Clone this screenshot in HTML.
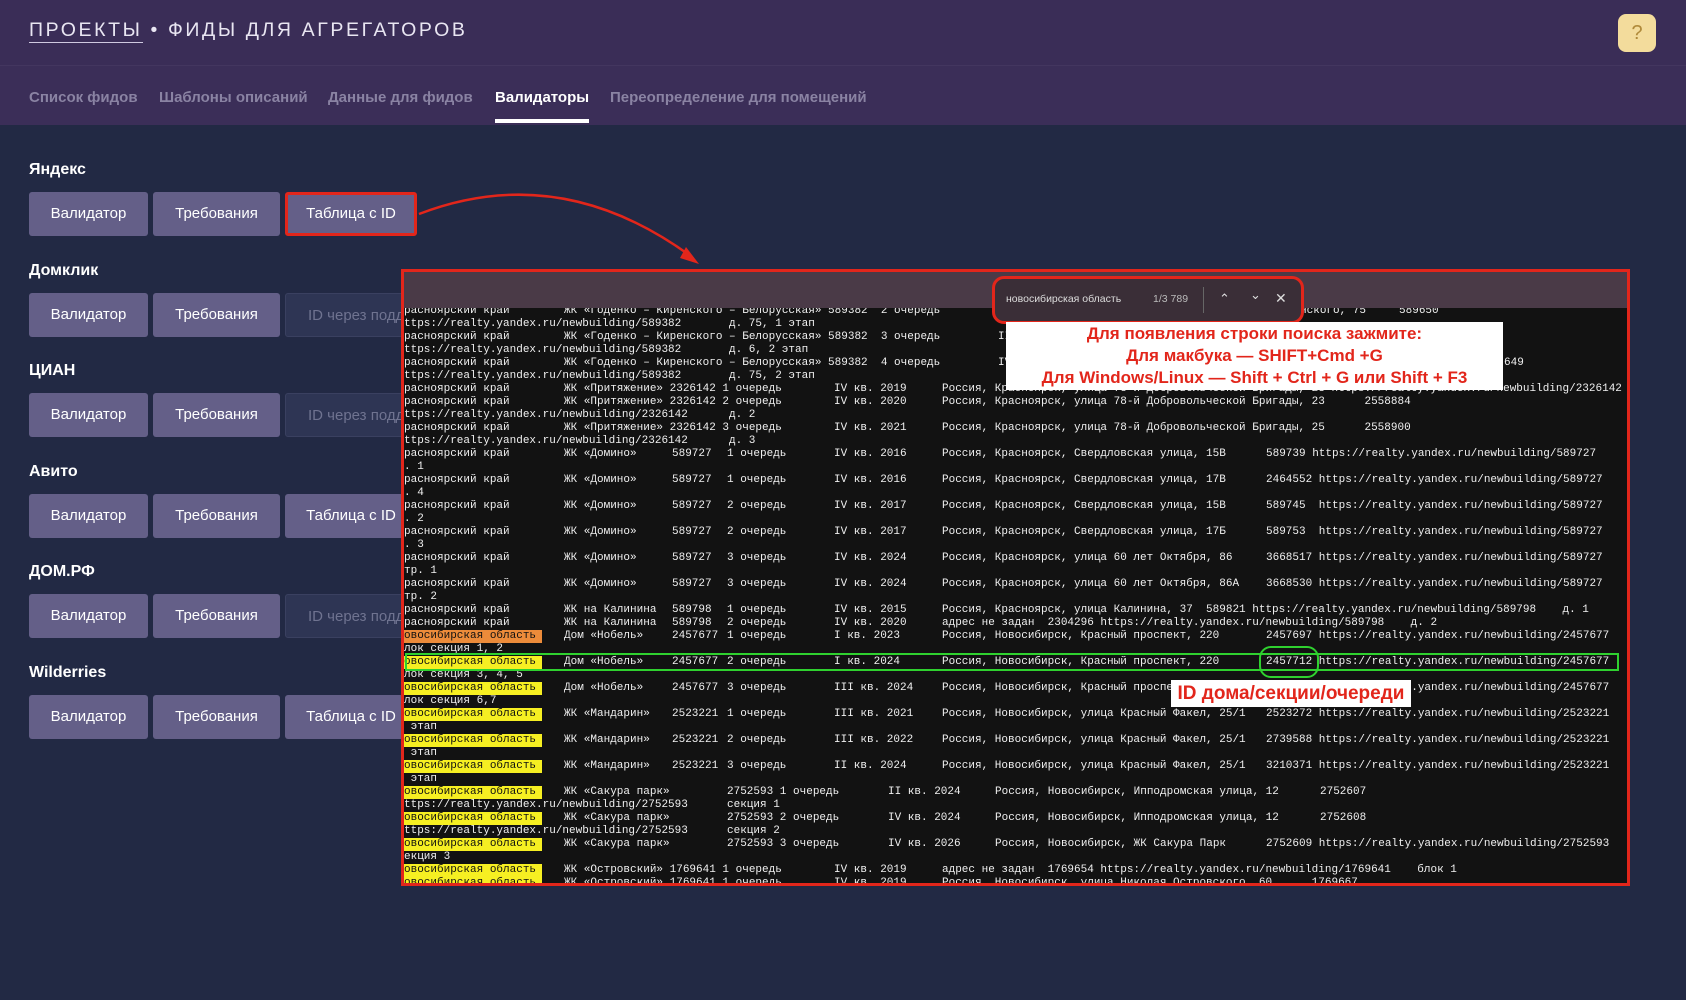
<!DOCTYPE html>
<html><head><meta charset="utf-8"><style>
*{margin:0;padding:0;box-sizing:border-box}
body{width:1686px;height:1000px;background:#222944;font-family:"Liberation Sans",sans-serif;position:relative;overflow:hidden}
.hdr{position:absolute;left:0;top:0;width:1686px;height:65px;background:#3a2d57}
.nav{position:absolute;left:0;top:65px;width:1686px;height:60px;background:#3b2e58;border-top:1px solid #43365f}
.title{position:absolute;left:29px;top:19px;color:#e9e6f2;font-size:19.5px;letter-spacing:2.6px}
.title u{text-decoration:none;border-bottom:1.5px solid #cfc9e0;padding-bottom:1px}
.help{position:absolute;left:1618px;top:14px;width:38px;height:38px;border-radius:8px;background:#f3dc9c;color:#b08a3a;font-size:20px;text-align:center;line-height:38px}
.tab{position:absolute;top:89px;color:#8a83a3;font-size:15px;font-weight:bold}
.tab.act{color:#fff}
.ul{position:absolute;left:495px;top:119px;width:94px;height:4px;background:#fff}
h3{position:absolute;left:29px;color:#fff;font-size:16px;font-weight:bold}
.btn{position:absolute;height:44px;border-radius:3px;background:#645f88;color:#fff;font-size:15px;text-align:center;line-height:44px}
.dis{background:#2e3554;color:#6f7390;text-align:left;padding-left:22px;border:1px solid #3a4060}
.term{position:absolute;left:401px;top:269px;width:1229px;height:617px;background:#121212;border:3px solid #e2261b;overflow:hidden}
.bar{position:absolute;left:0;top:0;width:100%;height:36px;background:#4a3a47;z-index:2}
.l{position:absolute;left:0;height:13px;width:100%;font-family:"Liberation Mono","DejaVu Sans Mono",monospace;font-size:11px;color:#f0f0f0;white-space:pre;line-height:13px}
.l i{font-style:normal;position:absolute;top:0}
.y{background:#f6ef22;color:#111}
.o{background:#ec8b3a;color:#111}
</style></head><body>
<div class="hdr"></div><div class="nav"></div>
<div class="title"><u>ПРОЕКТЫ</u> • ФИДЫ ДЛЯ АГРЕГАТОРОВ</div>
<div class="help">?</div>
<div class="tab" style="left:29px">Список фидов</div>
<div class="tab" style="left:159px">Шаблоны описаний</div>
<div class="tab" style="left:328px">Данные для фидов</div>
<div class="tab act" style="left:495px">Валидаторы</div>
<div class="tab" style="left:610px">Переопределение для помещений</div>
<div class="ul"></div>

<h3 style="top:161px">Яндекс</h3>
<div class="btn" style="left:29px;top:192px;width:119px">Валидатор</div>
<div class="btn" style="left:153px;top:192px;width:127px">Требования</div>
<div class="btn" style="left:285px;top:192px;width:132px;border:3px solid #e2261b;line-height:38px">Таблица с ID</div>

<h3 style="top:262px">Домклик</h3>
<div class="btn" style="left:29px;top:293px;width:119px">Валидатор</div>
<div class="btn" style="left:153px;top:293px;width:127px">Требования</div>
<div class="btn dis" style="left:285px;top:293px;width:140px">ID через подд</div>

<h3 style="top:362px">ЦИАН</h3>
<div class="btn" style="left:29px;top:393px;width:119px">Валидатор</div>
<div class="btn" style="left:153px;top:393px;width:127px">Требования</div>
<div class="btn dis" style="left:285px;top:393px;width:140px">ID через подд</div>

<h3 style="top:463px">Авито</h3>
<div class="btn" style="left:29px;top:494px;width:119px">Валидатор</div>
<div class="btn" style="left:153px;top:494px;width:127px">Требования</div>
<div class="btn" style="left:285px;top:494px;width:132px">Таблица с ID</div>

<h3 style="top:563px">ДОМ.РФ</h3>
<div class="btn" style="left:29px;top:594px;width:119px">Валидатор</div>
<div class="btn" style="left:153px;top:594px;width:127px">Требования</div>
<div class="btn dis" style="left:285px;top:594px;width:140px">ID через подд</div>

<h3 style="top:664px">Wilderries</h3>
<div class="btn" style="left:29px;top:695px;width:119px">Валидатор</div>
<div class="btn" style="left:153px;top:695px;width:127px">Требования</div>
<div class="btn" style="left:285px;top:695px;width:132px">Таблица с ID</div>

<div class="term">
<div class="bar"></div>
<div class="l" style="top:33px"><i style="left:0">расноярский край</i><i style="left:160px">ЖК «Годенко – Киренского – Белорусская» 589382  2 очередь</i><i style="left:830px">емика Киренского, 75     589650</i></div>
<div class="l" style="top:46px"><i style="left:0">ttps://realty.yandex.ru/newbuilding/589382</i><i style="left:325px">д. 75, 1 этап</i></div>
<div class="l" style="top:59px"><i style="left:0">расноярский край</i><i style="left:160px">ЖК «Годенко – Киренского – Белорусская» 589382  3 очередь</i><i style="left:594px">II</i></div>
<div class="l" style="top:72px"><i style="left:0">ttps://realty.yandex.ru/newbuilding/589382</i><i style="left:325px">д. 6, 2 этап</i></div>
<div class="l" style="top:85px"><i style="left:0">расноярский край</i><i style="left:160px">ЖК «Годенко – Киренского – Белорусская» 589382  4 очередь</i><i style="left:594px">IV</i><i style="left:1100px">649</i></div>
<div class="l" style="top:98px"><i style="left:0">ttps://realty.yandex.ru/newbuilding/589382</i><i style="left:325px">д. 75, 2 этап</i></div>
<div class="l" style="top:111px"><i style="left:0">расноярский край</i><i style="left:160px">ЖК «Притяжение» 2326142 1 очередь</i><i style="left:430px">IV кв. 2019</i><i style="left:538px">Россия, Красноярск, улица 78-й Добровольческой Бригады, 23 https://realty.yandex.ru/newbuilding/2326142    д. 1</i></div>
<div class="l" style="top:124px"><i style="left:0">расноярский край</i><i style="left:160px">ЖК «Притяжение» 2326142 2 очередь</i><i style="left:430px">IV кв. 2020</i><i style="left:538px">Россия, Красноярск, улица 78-й Добровольческой Бригады, 23      2558884</i></div>
<div class="l" style="top:137px"><i style="left:0">ttps://realty.yandex.ru/newbuilding/2326142</i><i style="left:325px">д. 2</i></div>
<div class="l" style="top:150px"><i style="left:0">расноярский край</i><i style="left:160px">ЖК «Притяжение» 2326142 3 очередь</i><i style="left:430px">IV кв. 2021</i><i style="left:538px">Россия, Красноярск, улица 78-й Добровольческой Бригады, 25      2558900</i></div>
<div class="l" style="top:163px"><i style="left:0">ttps://realty.yandex.ru/newbuilding/2326142</i><i style="left:325px">д. 3</i></div>
<div class="l" style="top:176px"><i style="left:0">расноярский край</i><i style="left:160px">ЖК «Домино»</i><i style="left:268px">589727</i><i style="left:323px">1 очередь</i><i style="left:430px">IV кв. 2016</i><i style="left:538px">Россия, Красноярск, Свердловская улица, 15В</i><i style="left:862px">589739 https://realty.yandex.ru/newbuilding/589727</i></div>
<div class="l" style="top:189px"><i style="left:0">. 1</i></div>
<div class="l" style="top:202px"><i style="left:0">расноярский край</i><i style="left:160px">ЖК «Домино»</i><i style="left:268px">589727</i><i style="left:323px">1 очередь</i><i style="left:430px">IV кв. 2016</i><i style="left:538px">Россия, Красноярск, Свердловская улица, 17В</i><i style="left:862px">2464552 https://realty.yandex.ru/newbuilding/589727</i></div>
<div class="l" style="top:215px"><i style="left:0">. 4</i></div>
<div class="l" style="top:228px"><i style="left:0">расноярский край</i><i style="left:160px">ЖК «Домино»</i><i style="left:268px">589727</i><i style="left:323px">2 очередь</i><i style="left:430px">IV кв. 2017</i><i style="left:538px">Россия, Красноярск, Свердловская улица, 15В</i><i style="left:862px">589745  https://realty.yandex.ru/newbuilding/589727</i></div>
<div class="l" style="top:241px"><i style="left:0">. 2</i></div>
<div class="l" style="top:254px"><i style="left:0">расноярский край</i><i style="left:160px">ЖК «Домино»</i><i style="left:268px">589727</i><i style="left:323px">2 очередь</i><i style="left:430px">IV кв. 2017</i><i style="left:538px">Россия, Красноярск, Свердловская улица, 17Б</i><i style="left:862px">589753  https://realty.yandex.ru/newbuilding/589727</i></div>
<div class="l" style="top:267px"><i style="left:0">. 3</i></div>
<div class="l" style="top:280px"><i style="left:0">расноярский край</i><i style="left:160px">ЖК «Домино»</i><i style="left:268px">589727</i><i style="left:323px">3 очередь</i><i style="left:430px">IV кв. 2024</i><i style="left:538px">Россия, Красноярск, улица 60 лет Октября, 86</i><i style="left:862px">3668517 https://realty.yandex.ru/newbuilding/589727</i></div>
<div class="l" style="top:293px"><i style="left:0">тр. 1</i></div>
<div class="l" style="top:306px"><i style="left:0">расноярский край</i><i style="left:160px">ЖК «Домино»</i><i style="left:268px">589727</i><i style="left:323px">3 очередь</i><i style="left:430px">IV кв. 2024</i><i style="left:538px">Россия, Красноярск, улица 60 лет Октября, 86А</i><i style="left:862px">3668530 https://realty.yandex.ru/newbuilding/589727</i></div>
<div class="l" style="top:319px"><i style="left:0">тр. 2</i></div>
<div class="l" style="top:332px"><i style="left:0">расноярский край</i><i style="left:160px">ЖК на Калинина</i><i style="left:268px">589798</i><i style="left:323px">1 очередь</i><i style="left:430px">IV кв. 2015</i><i style="left:538px">Россия, Красноярск, улица Калинина, 37  589821 https://realty.yandex.ru/newbuilding/589798    д. 1</i></div>
<div class="l" style="top:345px"><i style="left:0">расноярский край</i><i style="left:160px">ЖК на Калинина</i><i style="left:268px">589798</i><i style="left:323px">2 очередь</i><i style="left:430px">IV кв. 2020</i><i style="left:538px">адрес не задан  2304296 https://realty.yandex.ru/newbuilding/589798    д. 2</i></div>
<div class="l" style="top:358px"><i style="left:0;width:138px" class="o">овосибирская область</i><i style="left:160px">Дом «Нобель»</i><i style="left:268px">2457677</i><i style="left:323px">1 очередь</i><i style="left:430px">I кв. 2023</i><i style="left:538px">Россия, Новосибирск, Красный проспект, 220</i><i style="left:862px">2457697 https://realty.yandex.ru/newbuilding/2457677</i></div>
<div class="l" style="top:371px"><i style="left:0">лок секция 1, 2</i></div>
<div class="l" style="top:384px"><i style="left:0;width:138px" class="y">овосибирская область</i><i style="left:160px">Дом «Нобель»</i><i style="left:268px">2457677</i><i style="left:323px">2 очередь</i><i style="left:430px">I кв. 2024</i><i style="left:538px">Россия, Новосибирск, Красный проспект, 220</i><i style="left:862px">2457712 https://realty.yandex.ru/newbuilding/2457677</i></div>
<div class="l" style="top:397px"><i style="left:0">лок секция 3, 4, 5</i></div>
<div class="l" style="top:410px"><i style="left:0;width:138px" class="y">овосибирская область</i><i style="left:160px">Дом «Нобель»</i><i style="left:268px">2457677</i><i style="left:323px">3 очередь</i><i style="left:430px">III кв. 2024</i><i style="left:538px">Россия, Новосибирск, Красный проспект, 220</i><i style="left:862px">2457727 https://realty.yandex.ru/newbuilding/2457677</i></div>
<div class="l" style="top:423px"><i style="left:0">лок секция 6,7</i></div>
<div class="l" style="top:436px"><i style="left:0;width:138px" class="y">овосибирская область</i><i style="left:160px">ЖК «Мандарин»</i><i style="left:268px">2523221</i><i style="left:323px">1 очередь</i><i style="left:430px">III кв. 2021</i><i style="left:538px">Россия, Новосибирск, улица Красный Факел, 25/1</i><i style="left:862px">2523272 https://realty.yandex.ru/newbuilding/2523221</i></div>
<div class="l" style="top:449px"><i style="left:0"> этап</i></div>
<div class="l" style="top:462px"><i style="left:0;width:138px" class="y">овосибирская область</i><i style="left:160px">ЖК «Мандарин»</i><i style="left:268px">2523221</i><i style="left:323px">2 очередь</i><i style="left:430px">III кв. 2022</i><i style="left:538px">Россия, Новосибирск, улица Красный Факел, 25/1</i><i style="left:862px">2739588 https://realty.yandex.ru/newbuilding/2523221</i></div>
<div class="l" style="top:475px"><i style="left:0"> этап</i></div>
<div class="l" style="top:488px"><i style="left:0;width:138px" class="y">овосибирская область</i><i style="left:160px">ЖК «Мандарин»</i><i style="left:268px">2523221</i><i style="left:323px">3 очередь</i><i style="left:430px">II кв. 2024</i><i style="left:538px">Россия, Новосибирск, улица Красный Факел, 25/1</i><i style="left:862px">3210371 https://realty.yandex.ru/newbuilding/2523221</i></div>
<div class="l" style="top:501px"><i style="left:0"> этап</i></div>
<div class="l" style="top:514px"><i style="left:0;width:138px" class="y">овосибирская область</i><i style="left:160px">ЖК «Сакура парк»</i><i style="left:323px">2752593 1 очередь</i><i style="left:484px">II кв. 2024</i><i style="left:591px">Россия, Новосибирск, Ипподромская улица, 12</i><i style="left:916px">2752607</i></div>
<div class="l" style="top:527px"><i style="left:0">ttps://realty.yandex.ru/newbuilding/2752593</i><i style="left:323px">секция 1</i></div>
<div class="l" style="top:540px"><i style="left:0;width:138px" class="y">овосибирская область</i><i style="left:160px">ЖК «Сакура парк»</i><i style="left:323px">2752593 2 очередь</i><i style="left:484px">IV кв. 2024</i><i style="left:591px">Россия, Новосибирск, Ипподромская улица, 12</i><i style="left:916px">2752608</i></div>
<div class="l" style="top:553px"><i style="left:0">ttps://realty.yandex.ru/newbuilding/2752593</i><i style="left:323px">секция 2</i></div>
<div class="l" style="top:566px"><i style="left:0;width:138px" class="y">овосибирская область</i><i style="left:160px">ЖК «Сакура парк»</i><i style="left:323px">2752593 3 очередь</i><i style="left:484px">IV кв. 2026</i><i style="left:591px">Россия, Новосибирск, ЖК Сакура Парк</i><i style="left:862px">2752609 https://realty.yandex.ru/newbuilding/2752593</i></div>
<div class="l" style="top:579px"><i style="left:0">екция 3</i></div>
<div class="l" style="top:592px"><i style="left:0;width:138px" class="y">овосибирская область</i><i style="left:160px">ЖК «Островский» 1769641 1 очередь</i><i style="left:430px">IV кв. 2019</i><i style="left:538px">адрес не задан  1769654 https://realty.yandex.ru/newbuilding/1769641    блок 1</i></div>
<div class="l" style="top:605px"><i style="left:0;width:138px" class="y">овосибирская область</i><i style="left:160px">ЖК «Островский» 1769641 1 очередь</i><i style="left:430px">IV кв. 2019</i><i style="left:538px">Россия, Новосибирск, улица Николая Островского, 60      1769667</i></div>
<div style="position:absolute;left:1px;top:381px;width:1214px;height:18px;border:2px solid #2fd12f;z-index:3"></div>
<div style="position:absolute;left:855px;top:374px;width:60px;height:32px;border:2px solid #2fd12f;border-radius:12px;z-index:3"></div>
<div style="position:absolute;left:588px;top:4px;width:312px;height:48px;border:3px solid #e2261b;border-radius:12px;background:#3a2e37;z-index:4;color:#ddd;font-size:10.5px;font-family:'Liberation Sans',sans-serif">
<span style="position:absolute;left:11px;top:14px">новосибирская область</span>
<span style="position:absolute;left:158px;top:14px;color:#bbb">1/3 789</span>
<span style="position:absolute;left:208px;top:8px;width:1px;height:26px;background:#666"></span>
<span style="position:absolute;left:224px;top:12px;font-size:13px">&#8963;</span>
<span style="position:absolute;left:255px;top:8px;font-size:13px">&#8964;</span>
<span style="position:absolute;left:280px;top:11px;font-size:14px">✕</span>
</div>
<div style="position:absolute;left:602px;top:50px;width:497px;height:68px;background:#fff;z-index:5;color:#e2261b;font-weight:bold;font-size:17px;line-height:22px;text-align:center;font-family:'Liberation Sans',sans-serif;padding-top:1px;white-space:nowrap">Для появления строки поиска зажмите:<br>Для макбука — SHIFT+Cmd +G<br>Для Windows/Linux — Shift + Ctrl + G или Shift + F3</div>
<div style="position:absolute;left:767px;top:408px;width:240px;height:27px;background:#fff;z-index:5;color:#e2261b;font-weight:bold;font-size:19px;line-height:27px;text-align:center;font-family:'Liberation Sans',sans-serif;white-space:nowrap">ID дома/секции/очереди</div>
</div>
<svg style="position:absolute;left:0;top:0" width="1686" height="1000">
<path d="M419 214 Q560 160 692 257" fill="none" stroke="#e2261b" stroke-width="2.5"/>
<path d="M686 247 L699 264 L680 258 Z" fill="#e2261b"/>
</svg>
</body></html>
